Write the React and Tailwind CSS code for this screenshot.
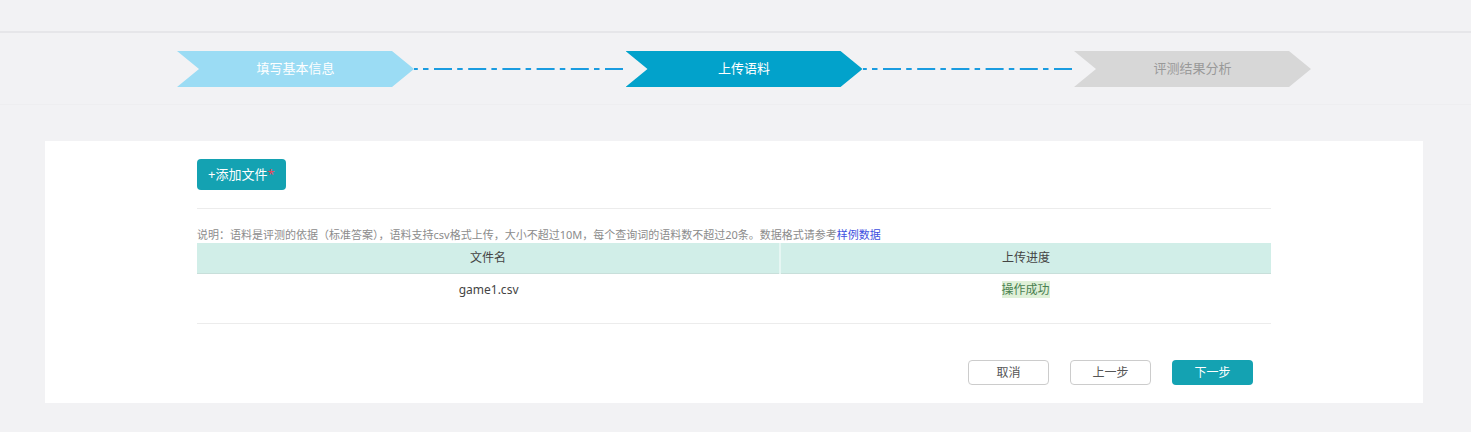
const STEPS = [
  { label: '填写基本信息', tone: 'bg-[#9bdcf4] text-white' },
  { label: '上传语料', tone: 'bg-[#02a2cb] text-white' },
  { label: '评测结果分析', tone: 'bg-[#d7d7d7] text-[#999]' },
];

const FILES = [{ name: 'game1.csv', status: '操作成功' }];

function Connector() {
  return (
    <svg className="h-0.5 w-full" aria-hidden="true">
      <line
        x1="0"
        y1="1"
        x2="100%"
        y2="1"
        stroke="#1a9ce0"
        strokeWidth="2"
        strokeDasharray="18 5.2 5.5 5.5"
        strokeDashoffset="14.2"
      />
    </svg>
  );
}

function Steps() {
  return (
    <nav aria-label="步骤" className="border-t-2 border-b border-t-[#e6e6e9] border-b-[#eeeef0] pt-[18px] pb-[17px] pl-[177px] pr-[160px]">
      <ol className="flex items-center">
        {STEPS.map((step, i) => (
          <li key={step.label} className={i > 0 ? 'flex flex-1 items-center' : 'flex items-center'}>
            {i > 0 && (
              <div className="min-w-0 flex-1 pr-0.5">
                <Connector />
              </div>
            )}
            <div
              aria-current={i === 1 ? 'step' : undefined}
              className={`flex h-9 w-[237px] items-center justify-center text-[13px] [clip-path:polygon(0_0,calc(100%-22px)_0,100%_50%,calc(100%-22px)_100%,0_100%,22px_50%)] ${step.tone}`}
            >
              {step.label}
            </div>
          </li>
        ))}
      </ol>
    </nav>
  );
}

function FileTable() {
  return (
    <table className="w-full table-fixed border-collapse text-center text-xs text-[#444]">
      <thead>
        <tr className="h-[30px] bg-[#d1eee8]">
          <th scope="col" className="w-[54.3%] border-r-2 border-b border-r-[#e6f6f3] border-b-[#c8dfda] font-normal">文件名</th>
          <th scope="col" className="border-b border-b-[#c8dfda] font-normal">上传进度</th>
        </tr>
      </thead>
      <tbody>
        {FILES.map((file) => (
          <tr key={file.name} className="h-[34px]">
            <td>{file.name}</td>
            <td>
              <span className="bg-[#dff0d8] text-[#4a8050]">{file.status}</span>
            </td>
          </tr>
        ))}
      </tbody>
    </table>
  );
}

export default function App() {
  return (
    <div className="min-h-screen bg-[#f2f2f4] pt-[31px] pb-7 font-['Noto_Sans','Noto_Sans_CJK_SC',sans-serif]">
      <Steps />
      <main className="mt-9 mr-12 ml-[45px] bg-white px-[152px] pt-[18px] pb-[18px]">
        <div className="border-b border-[#ececec] pb-[18px]">
          <button type="button" className="flex h-[31px] items-center rounded bg-[#14a2b2] px-[11px] text-[13px] text-white">
            +添加文件<span className="text-[#f04458]">*</span>
          </button>
        </div>
        <p className="mt-[18px] text-[11px] leading-4 text-[#8c8c8c]">
          说明：语料是评测的依据（标准答案），语料支持csv格式上传，大小不超过10M，每个查询词的语料数不超过20条。数据格式请参考<a href="#sample" className="text-[#3d4fe0]">样例数据</a>
        </p>
        <div className="border-b border-[#ececec] pb-4">
          <FileTable />
        </div>
        <div className="mt-9 flex justify-end gap-[21px] pr-[18px] text-xs">
          <button type="button" className="h-[25px] w-[81px] rounded border border-[#ccc] bg-white text-[#555]">取消</button>
          <button type="button" className="h-[25px] w-[81px] rounded border border-[#ccc] bg-white text-[#555]">上一步</button>
          <button type="button" className="h-[25px] w-[81px] rounded bg-[#14a2b2] text-white">下一步</button>
        </div>
      </main>
    </div>
  );
}
